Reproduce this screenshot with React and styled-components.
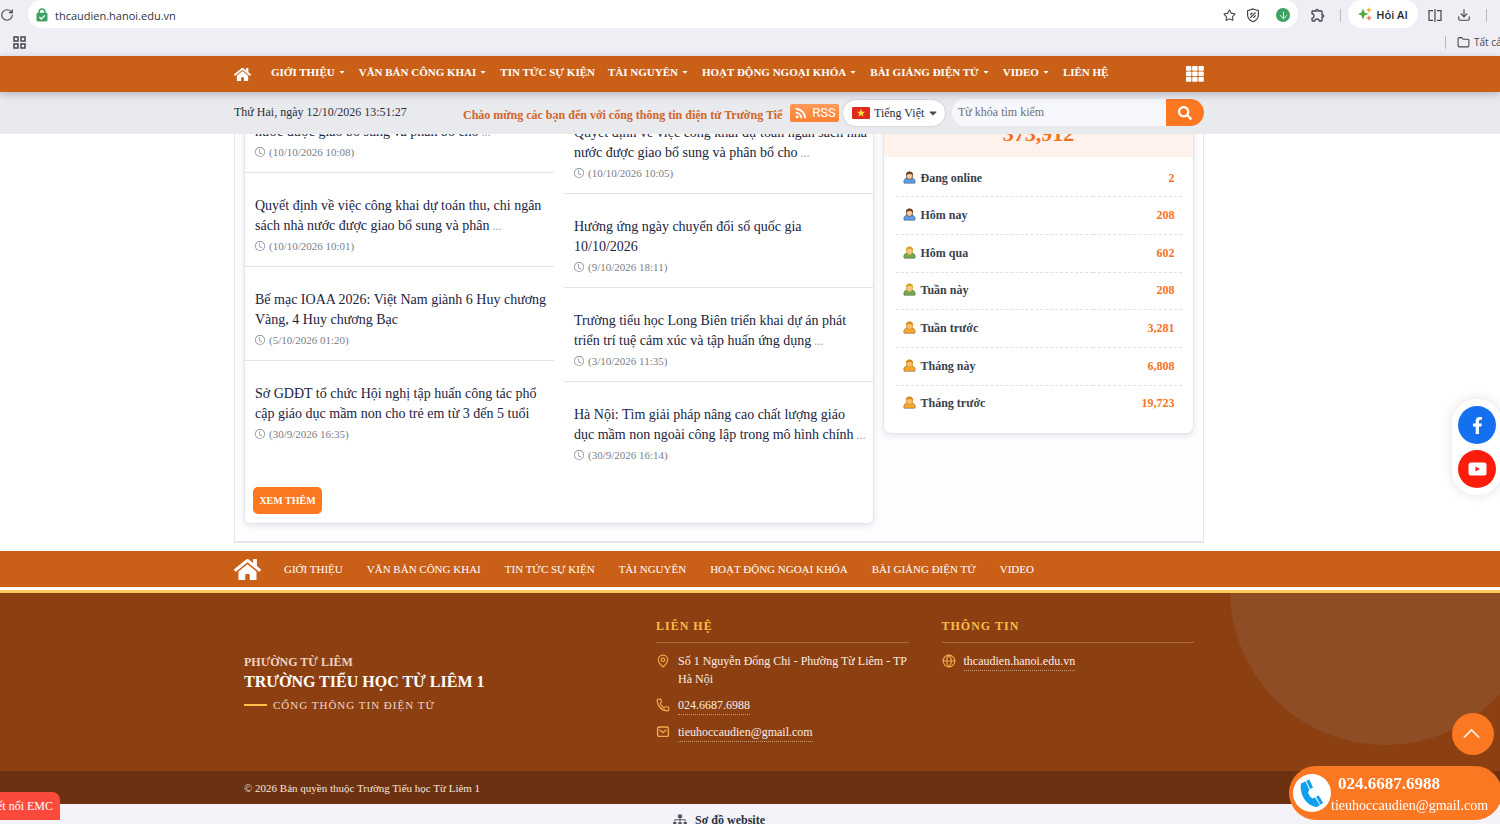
import React from "react";
import styled, { createGlobalStyle } from "styled-components";
import { FaHome, FaSearch, FaFacebookF, FaSitemap, FaCaretDown } from "react-icons/fa";
import { BsClock, BsChevronUp } from "react-icons/bs";
import { MdRssFeed, MdOutlineExtension } from "react-icons/md";
import {
  RotateCw,
  Star,
  Download,
  Folder,
  MapPin,
  Phone,
  Globe,
  ArrowDown,
} from "lucide-react";

const GlobalStyle = createGlobalStyle`
  * {
    box-sizing: border-box;
  }
  body {
    margin: 0;
    background: #fff;
    font-family: "Liberation Serif", "Times New Roman", serif;
    font-size: 12px;
    color: #2b2f3a;
  }
  a {
    color: inherit;
    text-decoration: none;
  }
  button, input, select {
    font-family: inherit;
    border: none;
    padding: 0;
  }
  ul {
    list-style: none;
    margin: 0;
    padding: 0;
  }
`;

const Page = styled.div`
  height: 100vh;
  overflow: hidden;
  display: flex;
  flex-direction: column;
`;

/* every band keeps its content in the same centred shell */
const Shell = styled.div`
  width: 100%;
  max-width: 970px;
  margin: 0 auto;
  display: flex;
  align-items: center;
`;

/* ---------- browser ---------- */
const Browser = styled.div`
  flex: none;
  height: 56px;
  background: #f0eef5;
  font-family: "Open Sans", "Noto Sans", sans-serif;
  color: #45454d;
`;
const AddressRow = styled.div`
  display: flex;
  align-items: center;
  height: 30px;
  padding-right: 13px;
`;
const Reload = styled(RotateCw)`
  flex: none;
  margin-right: 14px;
`;
const AddressBar = styled.div`
  flex: 1;
  height: 28px;
  margin: 0 12px 2px 0;
  border-radius: 14px;
  background: #fff;
  display: flex;
  align-items: center;
  padding: 2px 8px 0 8px;
`;
const AddressInput = styled.input`
  flex: 1;
  margin-left: 7px;
  font-size: 11px;
  color: #33333b;
  background: none;
  outline: none;
`;
const BrowserTools = styled.div`
  display: flex;
  align-items: center;
  gap: ${(p) => p.$gap}px;
`;
const GreenDot = styled.span`
  width: 14px;
  height: 14px;
  margin-left: 6px;
  border-radius: 50%;
  background: #3fa264;
  color: #fff;
  display: flex;
  align-items: center;
  justify-content: center;
`;
const Divider = styled.span`
  width: 1px;
  height: 13px;
  background: #b9b8c0;
`;
const AskButton = styled.button`
  height: 28px;
  width: 70px;
  margin: 0 10px 2px 7px;
  border-radius: 14px;
  background: #fff;
  display: flex;
  align-items: center;
  justify-content: center;
  gap: 4px;
  font-size: 11px;
  font-weight: 600;
  color: #26262c;
`;
const BookmarkRow = styled.div`
  display: flex;
  align-items: center;
  justify-content: space-between;
  height: 24px;
  padding-left: 13px;
`;
const AllBookmarks = styled.div`
  width: 55px;
  display: flex;
  align-items: center;
  gap: 4px;
  font-size: 10px;
  white-space: nowrap;
  overflow: hidden;

  svg {
    flex: none;
    margin-left: 7px;
  }
  span {
    flex: none;
  }
`;

/* ---------- header ---------- */
const NavBar = styled.nav`
  flex: none;
  height: 36px;
  padding-right: 62px;
  display: flex;
  background: #ca5f18;
  color: #fff;
  position: relative;
  z-index: 2;
  box-shadow: 0 2px 8px rgba(40, 50, 80, 0.3);
`;
const HomeLink = styled.a`
  display: flex;
  margin-right: ${(p) => p.$space}px;
`;
const TopMenu = styled.ul`
  flex: 1;
  display: flex;
  gap: 13px;
  font-size: 11px;
  font-weight: bold;
  line-height: 16px;
  padding-bottom: 4px;
  white-space: nowrap;
`;
const TopLink = styled.a`
  display: flex;
  align-items: center;
  gap: 3px;
`;
const InfoBar = styled.div`
  flex: none;
  height: 42px;
  padding: 0 62px 1px 0;
  display: flex;
  background: #e9eaee;
  position: relative;
  z-index: 1;
`;
const Today = styled.time`
  width: 229px;
  font-size: 12px;
`;
const Marquee = styled.div`
  flex: 1;
  min-width: 0;
  margin-right: 7px;
  padding-top: 6px;
  overflow: hidden;
  white-space: nowrap;
  font-size: 12px;
  font-weight: bold;
  color: #cf6529;
`;
const RssLink = styled.a`
  width: 49px;
  height: 18px;
  margin-right: 4px;
  border-radius: 2px;
  background: linear-gradient(#fc9a5c, #fb812e);
  color: #fff;
  font-family: Roboto, sans-serif;
  font-size: 13px;
  display: flex;
  align-items: center;
  justify-content: center;
  gap: 3px;
`;
const Language = styled.label`
  width: 102px;
  height: 26px;
  margin-right: 7px;
  padding: 0 6px 0 9px;
  border-radius: 13px;
  background: #fff;
  box-shadow: 0 0 2px rgba(0, 0, 0, 0.25);
  color: #4a4c55;
  display: flex;
  align-items: center;
  gap: 4px;

  svg {
    flex: none;
  }
`;
const LanguageSelect = styled.select`
  flex: 1;
  min-width: 0;
  appearance: none;
  background: none;
  font-size: 12px;
  color: #2b2f3a;
`;
/* sits over the free end of the select */
const LanguageCaret = styled(FaCaretDown)`
  margin-left: -4px;
  pointer-events: none;
`;
const SearchForm = styled.form`
  width: 252px;
  height: 27px;
  border-radius: 14px;
  overflow: hidden;
  display: flex;
  background: #f7f8fd;
`;
const SearchInput = styled.input`
  flex: 1;
  min-width: 0;
  padding-left: 6px;
  background: none;
  font-size: 12px;

  &::placeholder {
    color: #6d6f78;
  }
`;
const SearchButton = styled.button`
  width: 38px;
  background: #fb7722;
  color: #fff;
  display: flex;
  align-items: center;
  justify-content: center;
`;

/* ---------- content ---------- */
const Main = styled.main`
  flex: none;
  padding: 0 62px 8px 0;
  overflow: hidden;
`;
const Content = styled(Shell)`
  align-items: flex-start;
  gap: 9px;
  margin-top: -56px;
  padding: 0 9px 17px;
  border: 1px solid #e6e5ee;
  border-top: none;
  border-bottom-width: 2px;
  background: #fefdff;
`;
const Card = styled.section`
  background: #fff;
  border: 1px solid #e4e4ec;
  border-radius: 6px;
  box-shadow: 0 2px 6px rgba(60, 60, 90, 0.13);
`;
const NewsCard = styled(Card)`
  flex: 1;
  padding-bottom: 9px;
`;
const NewsColumns = styled.div`
  display: grid;
  grid-template-columns: 1fr 1fr;
  gap: 10px;
`;
const NewsList = styled.ul`
  padding-top: ${(p) => p.$start}px;
`;
const NewsItem = styled.li`
  height: 94px;
  padding: 23px 6px 0 10px;
  border-bottom: 1px solid #e2e2ea;

  &:last-child {
    border-bottom: none;
  }
`;
const NewsTitle = styled.a`
  display: block;
  font-size: 14px;
  line-height: 20px;
  color: #1a2440;

  span {
    font-size: 12px;
    color: #9a9ca6;
  }
`;
const NewsDate = styled.time`
  display: flex;
  align-items: center;
  gap: 4px;
  font-size: 11px;
  line-height: 20px;
  color: #7b7d88;
`;
const MoreButton = styled.button`
  display: block;
  width: 69px;
  height: 27px;
  margin: 11px 0 0 8px;
  border-radius: 5px;
  background: #fc7820;
  color: #fff;
  font-size: 10px;
  font-weight: bold;
`;
const StatsCard = styled(Card)`
  width: 311px;
  border-radius: 8px;
  overflow: hidden;
`;
const Total = styled.div`
  height: 78px;
  padding-bottom: 10px;
  background: #fff1ec;
  display: flex;
  align-items: flex-end;
  justify-content: center;
  font-size: 22px;
  font-weight: bold;
  color: #f2711f;
`;
const StatsTable = styled.table`
  width: 286px;
  height: 262px;
  margin: 3px auto 11px;
  border-collapse: collapse;

  tr + tr {
    border-top: 1px dashed #e0e0e8;
  }
  th {
    padding: 0 0 0 7px;
    text-align: left;
    font-size: 12px;
    color: #3a3f4d;
  }
  th svg {
    vertical-align: -2px;
    margin-right: 5px;
  }
  td {
    padding: 0 7px 0 0;
    text-align: right;
    font-size: 12px;
    font-weight: bold;
    color: #f57423;
  }
`;

/* ---------- footer ---------- */
const FooterNav = styled.nav`
  flex: none;
  height: 36px;
  padding-right: 62px;
  display: flex;
  background: #ca5f18;
  color: #fff;
`;
const FooterMenu = styled.ul`
  display: flex;
  gap: 24px;
  font-size: 11px;
  white-space: nowrap;
`;
const Footer = styled.footer`
  flex: none;
  height: 181px;
  margin-top: 3px;
  padding-right: 62px;
  border-top: 3px solid #fdc95a;
  background: #8c4012;
  color: #fbeee4;
  position: relative;
  overflow: hidden;
  display: flex;

  &::after {
    content: "";
    position: absolute;
    right: -40px;
    top: -158px;
    width: 310px;
    height: 310px;
    border-radius: 50%;
    background: rgba(160, 150, 140, 0.16);
  }
`;
const FooterGrid = styled(Shell)`
  padding: 0 10px;
  display: grid;
  grid-template-columns: 379px 1fr 1fr;
  gap: 33px;
  align-items: start;
`;
const Brand = styled.div`
  padding-top: 60px;
`;
const Ward = styled.div`
  font-size: 12px;
  font-weight: bold;
  line-height: 18px;
  color: #eed3c0;
`;
const SchoolName = styled.div`
  font-size: 16px;
  font-weight: bold;
  line-height: 22px;
  color: #fff;
`;
const Portal = styled.div`
  display: flex;
  align-items: center;
  gap: 6px;
  margin-top: 2px;
  font-size: 11px;
  letter-spacing: 1px;
  line-height: 20px;
  color: #f0d9c8;

  &::before {
    content: "";
    width: 23px;
    height: 2px;
    background: #fdc04a;
  }
`;
const FooterColumn = styled.div`
  padding-top: 24px;
`;
const FooterHeading = styled.h2`
  margin: 0 0 9px;
  padding-bottom: 7px;
  border-bottom: 1px solid #ab6a3e;
  font-size: 12px;
  line-height: 18px;
  letter-spacing: 1px;
  color: #fdbd45;
`;
const ContactRow = styled.div`
  display: flex;
  gap: 8px;
  margin-bottom: 8px;
  font-size: 12px;
  line-height: 18px;

  svg {
    flex: none;
    margin-top: 2px;
    color: #f5a94a;
  }
  a {
    border-bottom: 1px dotted #c79a7a;
  }
`;
const Copyright = styled.div`
  flex: none;
  height: 33px;
  padding-right: 62px;
  background: #6c3110;
  color: #f5e6da;
  font-size: 11px;
  display: flex;

  ${Shell} {
    padding: 0 10px;
  }
`;
const Sitemap = styled.div`
  flex: none;
  padding: 8px 62px 0 0;
  background: #f4f3f9;
  display: flex;
  justify-content: center;

  a {
    display: flex;
    align-items: center;
    gap: 8px;
    font-weight: bold;
    line-height: 16px;
    padding-bottom: 16px;
  }
  svg {
    color: #555863;
  }
`;

/* ---------- floating ---------- */
const SocialDock = styled.aside`
  position: fixed;
  right: -2px;
  top: 399px;
  z-index: 3;
  padding: 7px 6px;
  border-radius: 24px;
  background: #fff;
  box-shadow: 0 0 12px rgba(0, 0, 0, 0.12);
  display: flex;
  flex-direction: column;
  gap: 6px;
`;
const SocialLink = styled.a`
  width: 38px;
  height: 38px;
  border-radius: 50%;
  background: ${(p) => p.$color};
  color: #fff;
  display: flex;
  align-items: center;
  justify-content: center;
`;
const ToTop = styled.button`
  position: fixed;
  right: 6px;
  bottom: 69px;
  z-index: 3;
  width: 42px;
  height: 42px;
  padding: 0 4px 2px 0;
  border-radius: 50%;
  background: #fb7722;
  color: #fff;
  display: flex;
  align-items: center;
  justify-content: center;
`;
const Hotline = styled.aside`
  position: fixed;
  right: -2px;
  bottom: 4px;
  z-index: 3;
  width: 213px;
  height: 54px;
  padding-left: 4px;
  border-radius: 27px;
  background: #fb7722;
  color: #fff;
  display: flex;
  align-items: center;
`;
const HotlineIcon = styled.span`
  flex: none;
  width: 38px;
  height: 38px;
  border-radius: 50%;
  background: #fff;
  display: flex;
  align-items: center;
  justify-content: center;
`;
const HotlineText = styled.div`
  display: flex;
  flex-direction: column;
  padding-top: 4px;

  a {
    font-size: 14px;
    line-height: 22px;
  }
  a:first-child {
    padding-left: 7px;
    font-size: 17px;
    font-weight: bold;
  }
`;
const EmcLink = styled.a`
  position: fixed;
  left: 0;
  bottom: 4px;
  z-index: 3;
  width: 60px;
  height: 28px;
  padding-right: 7px;
  border-radius: 0 8px 0 0;
  background: #fb4a3c;
  color: #fff;
  overflow: hidden;
  white-space: nowrap;
  display: flex;
  align-items: center;
  justify-content: flex-end;
`;

const LockIcon = () => (
  <svg width="12" height="14" viewBox="0 0 12 14">
    <path d="M3.2 6V3.8a2.8 2.8 0 0 1 5.6 0V6" fill="none" stroke="#3fa264" strokeWidth="1.6" />
    <rect x="0.5" y="4.8" width="11" height="8.6" rx="1.4" fill="#3fa264" />
    <path d="M3.4 9l2 2 3.4-3.6" fill="none" stroke="#fff" strokeWidth="1.3" />
  </svg>
);

const ShieldIcon = () => (
  <svg width="14" height="15" viewBox="0 0 14 15" fill="none" stroke="#45454d" strokeWidth="1.2">
    <path d="M7 1l5.4 1.7v4.6c0 3-2.2 5.2-5.4 6.5C3.8 12.5 1.6 10.3 1.6 7.3V2.7z" />
    <path d="M4.2 9.8L9.5 4.5M4.3 7l2-2.3M7.3 9.8L9.7 7.3" />
  </svg>
);

const AppsIcon = () => (
  <svg width="13" height="13" viewBox="0 0 13 13" fill="none" stroke="#45454d" strokeWidth="1.5">
    <rect x="1" y="1" width="4" height="4" />
    <rect x="8" y="1" width="4" height="4" />
    <rect x="1" y="8" width="4" height="4" />
    <rect x="8" y="8" width="4" height="4" />
  </svg>
);

const SparkIcon = () => (
  <svg width="14" height="14" viewBox="0 0 14 14">
    <path d="M5 1.5l1.6 3.9L10.5 7 6.6 8.6 5 12.5 3.4 8.6 0 7l3.4-1.6z" fill="#58a845" />
    <path d="M11 0l.9 2.1L14 3l-2.1.9L11 6l-.9-2.1L8 3l2.1-.9z" fill="#f6b73c" />
    <path d="M11 8l.9 2.1 2.1.9-2.1.9L11 14l-.9-2.1L8 11l2.1-.9z" fill="#f08060" />
  </svg>
);

const SplitIcon = () => (
  <svg width="14" height="13" viewBox="0 0 14 13" fill="none" stroke="#45454d" strokeWidth="1.2">
    <path d="M5 1.6H1v9.8h4M9 1.6h4v9.8H9M7 0v13" />
  </svg>
);

const GridIcon = () => (
  <svg width="18" height="16" viewBox="0 0 18 16" fill="#fff">
    {[0, 1, 2].map((row) =>
      [0, 1, 2].map((col) => (
        <rect key={`${row}${col}`} x={col * 6.2} y={row * 5.5} width="5.4" height="4.7" rx="0.8" />
      ))
    )}
  </svg>
);

const FlagIcon = () => (
  <svg width="18" height="12" viewBox="0 0 18 12">
    <rect width="18" height="12" rx="1" fill="#e02a20" />
    <path d="M9 1.8l1.05 3h3.1l-2.5 1.85.95 3L9 7.8 6.4 9.65l.95-3-2.5-1.85h3.1z" fill="#ffe438" />
  </svg>
);

const YoutubeIcon = () => (
  <svg width="19" height="14" viewBox="0 0 19 14">
    <rect x="0.5" y="0.5" width="18" height="13" rx="2.5" fill="#fff" />
    <path d="M7.5 4.4v5.2L12 7z" fill="#fb1d0c" />
  </svg>
);

const MailIcon = () => (
  <svg width="14" height="14" viewBox="0 0 14 14" fill="none" stroke="currentColor" strokeWidth="1.4">
    <rect x="1.6" y="2" width="10.8" height="9.4" rx="1.5" />
    <path d="M3.5 4.8L7 7.5l3.5-2.7" />
  </svg>
);

const HandsetIcon = () => (
  <svg width="26" height="30" viewBox="0 0 26 30" fill="#10a0ee">
    <path d="M2 5.5l4.500-2L10.500 12 9 14c.5 2.500 2 5 4.500 6.500l2.500-1 5 7.500-3 2C8 28.500 0 16.500 2 5.500z" />
    <path d="M7.300 3l3-1.500 3.700 8-2.800 1.500zM17 18.800l2.800-1.300 4.400 7.500-2.700 1.500z" />
  </svg>
);

const UserIcon = ({ hair, face, shirt }) => (
  <svg width="13" height="13" viewBox="0 0 13 13">
    <path
      d="M1.2 12.3C-.2 9.5 2 7.3 4.3 6.8h4.4c2.3.5 4.5 2.7 3.1 5.5z"
      fill={shirt}
      stroke="#000"
      strokeOpacity="0.35"
      strokeWidth="0.9"
    />
    <ellipse cx="6.5" cy="4.8" rx="3.1" ry="3.7" fill={face} stroke={hair} strokeWidth="0.8" />
    <path d="M3 4.5C2.6 1.7 4.3.4 6.5.4s3.9 1.3 3.5 4.1C9 3.5 8 3 6.5 3S4.2 3.5 3 4.5z" fill={hair} />
  </svg>
);

const people = {
  blue: { hair: "#6d4126", face: "#f5cda6", shirt: "#5b9de8" },
  green: { hair: "#dba427", face: "#f3c98a", shirt: "#74ab4c" },
  orange: { hair: "#d98a1c", face: "#f8c069", shirt: "#f9a62b" },
};

const topMenu = [
  ["GIỚI THIỆU", true],
  ["VĂN BẢN CÔNG KHAI", true],
  ["TIN TỨC SỰ KIỆN", false],
  ["TÀI NGUYÊN", true],
  ["HOẠT ĐỘNG NGOẠI KHÓA", true],
  ["BÀI GIẢNG ĐIỆN TỬ", true],
  ["VIDEO", true],
  ["LIÊN HỆ", false],
];

const leftNews = [
  ["Quyết định về việc công khai dự toán ngân sách nhà nước được giao bổ sung và phân bổ cho", "10/10/2026 10:08", true],
  ["Quyết định về việc công khai dự toán thu, chi ngân sách nhà nước được giao bổ sung và phân", "10/10/2026 10:01", true],
  ["Bế mạc IOAA 2026: Việt Nam giành 6 Huy chương Vàng, 4 Huy chương Bạc", "5/10/2026 01:20"],
  ["Sở GDĐT tổ chức Hội nghị tập huấn công tác phổ cập giáo dục mầm non cho trẻ em từ 3 đến 5 tuổi", "30/9/2026 16:35"],
];

const rightNews = [
  ["Quyết định về việc công khai dự toán ngân sách nhà nước được giao bổ sung và phân bổ cho", "10/10/2026 10:05", true],
  ["Hưởng ứng ngày chuyển đổi số quốc gia 10/10/2026", "9/10/2026 18:11"],
  ["Trường tiểu học Long Biên triển khai dự án phát triển trí tuệ cảm xúc và tập huấn ứng dụng", "3/10/2026 11:35", true],
  ["Hà Nội: Tìm giải pháp nâng cao chất lượng giáo dục mầm non ngoài công lập trong mô hình chính", "30/9/2026 16:14", true],
];

const stats = [
  ["Đang online", "2", "blue"],
  ["Hôm nay", "208", "blue"],
  ["Hôm qua", "602", "green"],
  ["Tuần này", "208", "green"],
  ["Tuần trước", "3,281", "orange"],
  ["Tháng này", "6,808", "orange"],
  ["Tháng trước", "19,723", "orange"],
];

const News = ({ items, start }) => (
  <NewsList $start={start}>
    {items.map(([title, date, more]) => (
      <NewsItem key={date}>
        <NewsTitle href="#">
          {title}
          {more && <span> ...</span>}
        </NewsTitle>
        <NewsDate>
          <BsClock size={10} />({date})
        </NewsDate>
      </NewsItem>
    ))}
  </NewsList>
);

const App = () => {
  return (
    <Page>
      <GlobalStyle />

      <Browser>
        <AddressRow>
          <Reload size={14} />
          <AddressBar>
            <LockIcon />
            <AddressInput aria-label="Địa chỉ" defaultValue="thcaudien.hanoi.edu.vn" />
            <BrowserTools $gap={10}>
              <Star size={13} />
              <ShieldIcon />
              <GreenDot>
                <ArrowDown size={11} />
              </GreenDot>
            </BrowserTools>
          </AddressBar>
          <BrowserTools $gap={14}>
            <MdOutlineExtension size={16} />
            <Divider />
          </BrowserTools>
          <AskButton>
            <SparkIcon />
            Hỏi AI
          </AskButton>
          <BrowserTools $gap={15}>
            <SplitIcon />
            <Download size={14} />
            <Divider />
          </BrowserTools>
        </AddressRow>
        <BookmarkRow>
          <AppsIcon />
          <AllBookmarks>
            <Divider />
            <Folder size={13} />
            <span>Tất cả dấu trang</span>
          </AllBookmarks>
        </BookmarkRow>
      </Browser>

      <NavBar>
        <Shell>
          <HomeLink href="#" aria-label="Trang chủ" $space={20}>
            <FaHome size={17} />
          </HomeLink>
          <TopMenu>
            {topMenu.map(([label, caret]) => (
              <li key={label}>
                <TopLink href="#">
                  {label}
                  {caret && <FaCaretDown size={8} />}
                </TopLink>
              </li>
            ))}
          </TopMenu>
          <GridIcon />
        </Shell>
      </NavBar>

      <InfoBar>
        <Shell>
          <Today>Thứ Hai, ngày 12/10/2026 13:51:27</Today>
          <Marquee>Chào mừng các bạn đến với cổng thông tin điện tử Trường Tiểu học Từ Liêm 1</Marquee>
          <RssLink href="#">
            <MdRssFeed size={16} />
            RSS
          </RssLink>
          <Language>
            <FlagIcon />
            <LanguageSelect aria-label="Ngôn ngữ">
              <option>Tiếng Việt</option>
            </LanguageSelect>
            <LanguageCaret size={12} />
          </Language>
          <SearchForm>
            <SearchInput aria-label="Tìm kiếm" placeholder="Từ khóa tìm kiếm" />
            <SearchButton type="button" aria-label="Tìm">
              <FaSearch size={14} />
            </SearchButton>
          </SearchForm>
        </Shell>
      </InfoBar>

      <Main>
        <Content>
          <NewsCard>
            <NewsColumns>
              <News items={leftNews} start={0} />
              <News items={rightNews} start={21} />
            </NewsColumns>
            <MoreButton>XEM THÊM</MoreButton>
          </NewsCard>
          <StatsCard>
            <Total>373,912</Total>
            <StatsTable>
              <tbody>
                {stats.map(([label, value, color]) => (
                  <tr key={label}>
                    <th scope="row">
                      <UserIcon {...people[color]} />
                      {label}
                    </th>
                    <td>{value}</td>
                  </tr>
                ))}
              </tbody>
            </StatsTable>
          </StatsCard>
        </Content>
      </Main>

      <FooterNav>
        <Shell>
          <HomeLink href="#" aria-label="Trang chủ" $space={23}>
            <FaHome size={27} />
          </HomeLink>
          <FooterMenu>
            {topMenu.slice(0, 7).map(([label]) => (
              <li key={label}>
                <a href="#">{label}</a>
              </li>
            ))}
          </FooterMenu>
        </Shell>
      </FooterNav>

      <Footer>
        <FooterGrid>
          <Brand>
            <Ward>PHƯỜNG TỪ LIÊM</Ward>
            <SchoolName>TRƯỜNG TIỂU HỌC TỪ LIÊM 1</SchoolName>
            <Portal>CỔNG THÔNG TIN ĐIỆN TỬ</Portal>
          </Brand>
          <FooterColumn>
            <FooterHeading>LIÊN HỆ</FooterHeading>
            <ContactRow>
              <MapPin size={14} />
              <span>Số 1 Nguyễn Đổng Chi - Phường Từ Liêm - TP Hà Nội</span>
            </ContactRow>
            <ContactRow>
              <Phone size={14} />
              <a href="#">024.6687.6988</a>
            </ContactRow>
            <ContactRow>
              <MailIcon />
              <a href="#">tieuhoccaudien@gmail.com</a>
            </ContactRow>
          </FooterColumn>
          <FooterColumn>
            <FooterHeading>THÔNG TIN</FooterHeading>
            <ContactRow>
              <Globe size={14} />
              <a href="#">thcaudien.hanoi.edu.vn</a>
            </ContactRow>
          </FooterColumn>
        </FooterGrid>
      </Footer>

      <Copyright>
        <Shell>© 2026 Bản quyền thuộc Trường Tiểu học Từ Liêm 1</Shell>
      </Copyright>

      <Sitemap>
        <a href="#">
          <FaSitemap size={14} />
          Sơ đồ website
        </a>
      </Sitemap>

      <SocialDock>
        <SocialLink href="#" aria-label="Facebook" $color="#1570f0">
          <FaFacebookF size={17} />
        </SocialLink>
        <SocialLink href="#" aria-label="YouTube" $color="#fb1d0c">
          <YoutubeIcon />
        </SocialLink>
      </SocialDock>
      <ToTop aria-label="Lên đầu trang">
        <BsChevronUp size={19} strokeWidth={0.4} />
      </ToTop>
      <Hotline>
        <HotlineIcon>
          <HandsetIcon />
        </HotlineIcon>
        <HotlineText>
          <a href="#">024.6687.6988</a>
          <a href="#">tieuhoccaudien@gmail.com</a>
        </HotlineText>
      </Hotline>
      <EmcLink href="#">Kết nối EMC</EmcLink>
    </Page>
  );
};

export default App;
